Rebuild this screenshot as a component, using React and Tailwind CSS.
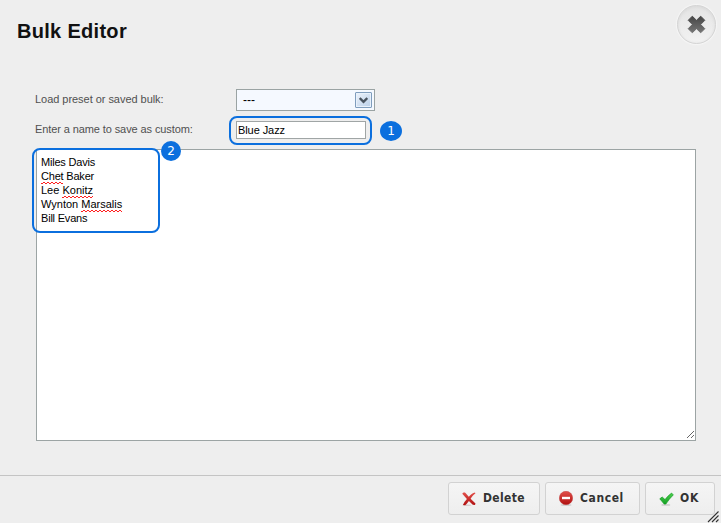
import React from "react";

const defs = (
  <defs>
    <linearGradient id="red" x1="0" y1="0" x2="0" y2="1">
      <stop offset="0" stopColor="#e2504b" />
      <stop offset="1" stopColor="#b01010" />
    </linearGradient>
    <linearGradient id="green" x1="0" y1="0" x2="0" y2="1">
      <stop offset="0" stopColor="#4fd050" />
      <stop offset="1" stopColor="#12a022" />
    </linearGradient>
    <linearGradient id="grey" gradientUnits="userSpaceOnUse" x1="0" y1="0" x2="0" y2="19">
      <stop offset="0" stopColor="#424242" />
      <stop offset="1" stopColor="#7a7a7a" />
    </linearGradient>
  </defs>
);

function DeleteIcon() {
  return (
    <svg className="h-[14px] w-[14px] shrink-0" viewBox="0 0 14 14">
      {defs}
      <ellipse cx="5" cy="13.2" rx="4.5" ry=".8" fill="#d8cccc" />
      <path d="M.3 1.8C.9.6 2.6.2 3.5 1.1L6.8 4.8C8.7 2.7 10.6 1.2 13 .6L13.4 1.4C11.5 2.8 9.9 4.5 8.6 6.7L13.5 11.4 13 13 10.8 12.8 6.9 9C5.6 10.8 4.3 12.3 3.2 13.3L.9 13C1.9 10.6 3.3 8.7 4.9 6.9Z" fill="url(#red)" />
    </svg>
  );
}

function CancelIcon() {
  return (
    <svg className="h-[15px] w-[14px] shrink-0" viewBox="0 0 14 15">
      <ellipse cx="7" cy="13.9" rx="5.5" ry="1" fill="#d0d0d0" />
      <circle cx="7" cy="7" r="6.7" fill="url(#red)" stroke="#c03c3c" strokeWidth=".5" />
      <rect x="3" y="5.8" width="8" height="2.4" fill="#fff" />
    </svg>
  );
}

function CheckIcon() {
  return (
    <svg className="h-[14px] w-[15px] shrink-0" viewBox="0 0 15 14">
      <ellipse cx="6.8" cy="12.9" rx="4.5" ry=".9" fill="#cbcbcb" />
      <path d="M.8 6.8 3.2 5 6 7.6C8 5 10 3 12.6 1.1L14.3 2.9C11.5 5.6 9 8.6 6.9 12L5.2 12.1Z" fill="url(#green)" stroke="#139c22" strokeWidth=".7" />
    </svg>
  );
}

function FooterButton({ className, icon, children }) {
  return (
    <button className={`flex h-[33px] items-center rounded-[3px] border border-[#d2d2d2] bg-linear-to-b from-[#f5f5f5] to-[#eeeeee] pl-[13px] text-[12px] font-bold text-[#333] [font-family:'DejaVu_Sans_Condensed','DejaVu_Sans',sans-serif] ${className}`}>
      {icon}
      <span className="-mt-px">{children}</span>
    </button>
  );
}

function Misspelled({ children }) {
  return (
    <span className="relative inline-block">
      {children}
      <svg className="absolute bottom-[-1px] left-0 h-[2px] w-full" shapeRendering="crispEdges">
        <defs>
          <pattern id="wave" width="4" height="2" patternUnits="userSpaceOnUse">
            <path d="M0 1h2v1H0zM2 0h2v1H2z" fill="#ff2020" />
          </pattern>
        </defs>
        <rect width="100%" height="2" fill="url(#wave)" />
      </svg>
    </span>
  );
}

export default function App() {
  return (
    <div className="relative flex h-[523px] w-[721px] flex-col overflow-hidden bg-[#eeeeee] text-[11px] [font-family:'Liberation_Sans',Arial,sans-serif]">
      <header className="flex h-[89px] shrink-0 items-start justify-between pl-[17px] pr-[5px]">
        <h1 className="mt-[18px] text-[20px] leading-[26px] font-bold tracking-[0.3px] text-[#111]">Bulk Editor</h1>
        <button aria-label="Close" className="mt-[5px] flex size-[39px] items-center justify-center rounded-full border border-[#d4d4d4] bg-linear-to-b from-[#e4e4e4] to-[#f2f2f2] shadow-[inset_0_1px_3px_#d8d8d8,0_0_1px_1px_#f6f6f6]">
          <svg className="size-[19px]" viewBox="0 0 19 19">
            <path d="M5.3 1.2 9.5 5.3 13.7 1.2 17.8 5.3 13.7 9.5 17.8 13.7 13.7 17.8 9.5 13.7 5.3 17.8 1.2 13.7 5.3 9.5 1.2 5.3Z" fill="url(#grey)" stroke="url(#grey)" strokeWidth="1" strokeLinejoin="round" />
          </svg>
        </button>
      </header>

      <main className="flex flex-1 flex-col pl-[36px] text-[#505050]">
        <div className="flex h-[22px] items-start">
          <label className="-ml-px w-[201px] leading-[20px] tracking-[-0.04px]">Load preset or saved bulk:</label>
          <div className="flex h-[22px] w-[139px] items-center justify-between border border-[#9aa3a3] bg-[#f5f9ff] pr-[2px] pl-[6px] text-[12px] text-black">
            <span>---</span>
            <span className="flex h-[16px] w-[17px] items-center justify-center rounded-[1px] border border-[#7f9dbd] bg-linear-to-br from-[#edf3fb] to-[#b9cfe8] shadow-[inset_0_0_0_1px_#e8f1fb]">
              <svg className="h-[7px] w-[9px]" viewBox="0 0 9 7">
                <path d="M.7 1 4.5 4.8 8.3 1" fill="none" stroke="#48535f" strokeWidth="2.4" />
              </svg>
            </span>
          </div>
        </div>
        <div className="mt-[10px] flex h-[18px] items-start">
          <label className="-ml-px w-[201px] leading-[17px] tracking-[-0.1px]">Enter a name to save as custom:</label>
          <div className="relative h-[18px] w-[130px] border border-[#a0a5a5] bg-white pl-px leading-[17px] text-black">
            <span className="tracking-[-0.08px]">Blue Jazz</span>
            <div className="absolute -top-[6px] -left-[8px] h-[29px] w-[143px] rounded-[8px] border-2 border-[#0b6fde]" />
            <div className="absolute -top-px left-[143px] flex h-[20px] w-[22px] items-center justify-center rounded-[50%] bg-[#0b6fde] text-[12px] text-white [font-family:'DejaVu_Sans',sans-serif]">1</div>
          </div>
        </div>
        <div className="relative mt-[10px] h-[292px] w-[660px] border border-[#9ca4a4] bg-white pt-[5px] pl-[4px] leading-[14px] text-black">
          <p className="tracking-[-0.2px]">Miles Davis</p>
          <p className="tracking-[-0.2px]"><Misspelled>Chet</Misspelled> Baker</p>
          <p>Lee <Misspelled>Konitz</Misspelled></p>
          <p>Wynton <Misspelled>Marsalis</Misspelled></p>
          <p className="tracking-[-0.2px]">Bill Evans</p>
          <div className="absolute -top-[2px] -left-[5px] h-[85px] w-[128px] rounded-[8px] border-2 border-[#0b6fde]" />
          <div className="absolute -top-[9px] left-[124px] flex size-[20px] items-center justify-center rounded-full bg-[#0b6fde] text-[12px] text-white [font-family:'DejaVu_Sans',sans-serif]">2</div>
          <svg className="absolute right-px bottom-px size-[8px]" viewBox="0 0 8 8" shapeRendering="crispEdges">
            <path d="M.5 7.5 7.5.5M4.5 7.5 7.5 4.5" stroke="#666" />
          </svg>
        </div>
      </main>

      <footer className="flex h-[48px] shrink-0 justify-end gap-[5px] border-t border-[#c4c4c4] pt-[6px] pr-[6px]">
        <FooterButton className="w-[92px] gap-[7px] tracking-[0.35px]" icon={<DeleteIcon />}>Delete</FooterButton>
        <FooterButton className="w-[95px] gap-[7px] tracking-[0.6px]" icon={<CancelIcon />}>Cancel</FooterButton>
        <FooterButton className="w-[70px] gap-[6px] tracking-[0.8px]" icon={<CheckIcon />}>OK</FooterButton>
      </footer>
      <svg className="absolute right-px bottom-0 size-[13px]" viewBox="0 0 13 13">
        <path d="M1 12 11.5 1.5M5 12 11.5 5.5M9 12 11.5 9.5" stroke="#333" strokeWidth="1.1" />
      </svg>
    </div>
  );
}
